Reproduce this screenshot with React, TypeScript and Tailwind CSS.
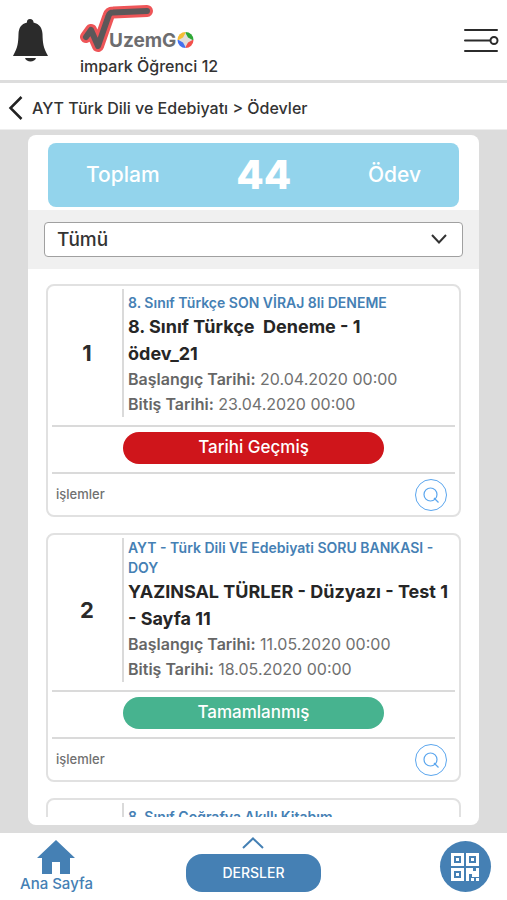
import { useState } from "react";

type Homework = {
  id: number;
  book: string;
  title: string;
  start: string;
  end: string;
  status: "expired" | "completed";
};

const homeworks: Homework[] = [
  {
    id: 1,
    book: "8. Sınıf Türkçe SON VİRAJ 8li DENEME",
    title: "8. Sınıf Türkçe \u00a0Deneme - 1\nödev_21",
    start: "20.04.2020 00:00",
    end: "23.04.2020 00:00",
    status: "expired",
  },
  {
    id: 2,
    book: "AYT - Türk Dili VE Edebiyati SORU BANKASI - DOY",
    title: "YAZINSAL TÜRLER - Düzyazı - Test 1\n- Sayfa 11",
    start: "11.05.2020 00:00",
    end: "18.05.2020 00:00",
    status: "completed",
  },
  {
    id: 3,
    book: "8. Sınıf Coğrafya Akıllı Kitabım",
    title: "8. Sınıf Coğrafya \u00a0Deneme - 1\nödev_22",
    start: "20.04.2020 00:00",
    end: "23.04.2020 00:00",
    status: "completed",
  },
];

const statuses = {
  expired: { label: "Tarihi Geçmiş", color: "bg-[#cf151b]" },
  completed: { label: "Tamamlanmış", color: "bg-[#47b38f]" },
};

const Logo = () => (
  <svg viewBox="0 0 116 50" className="w-[116px] h-[50px]" role="img" aria-label="UzemGO">
    <g fill="none" strokeLinecap="round" strokeLinejoin="round">
      <path d="M6 33 L11 26 L18 42 L28.500 12 Q29.500 8.500 33 8.500 L67 7" stroke="#ee5558" strokeWidth="12" />
      <path d="M6 33 L11 26 L18 42 L28.500 12 Q29.500 8.500 33 8.500 L67 7" stroke="#5c5759" strokeWidth="6" />
    </g>
    <text x="29" y="43" fontSize="19" fontWeight="700" fill="#6d6d6f" fontFamily="Inter, sans-serif">
      UzemG
    </text>
    <path d="M105.500 36 V28 A8 8 0 0 1 113.500 36z" fill="#2ea836" />
    <path d="M105.500 36 H113.500 A8 8 0 0 1 105.500 44z" fill="#f2504b" />
    <path d="M105.500 36 V44 A8 8 0 0 1 97.500 36z" fill="#4470ee" />
    <path d="M105.500 36 H97.500 A8 8 0 0 1 105.500 28z" fill="#f5bd35" />
    <path d="M105.500 29 L108 33.500 L112.500 36 L108 38.500 L105.500 43 L103 38.500 L98.500 36 L103 33.500z" fill="#e2dedb" />
  </svg>
);

const HomeworkCard = ({ homework }: { homework: Homework }) => {
  const status = statuses[homework.status];

  return (
    <article className="shrink-0 border-2 border-[#e1e1e1] rounded-lg px-1 pt-[3px]">
      <div className="flex min-h-32 mb-2">
        <div className="w-[70px] shrink-0 flex items-center justify-center text-[22px] font-bold text-[#2b2b2b]">
          {homework.id}
        </div>
        <div className="flex-1 flex flex-col justify-end border-l-2 border-[#dadada] pl-1">
          <h3 className="text-sm leading-5 font-semibold text-[#4580b4]">{homework.book}</h3>
          <h2 className="text-lg leading-[27px] font-bold text-[#262626] whitespace-pre-line">{homework.title}</h2>
          <p className="text-base leading-[25px] text-[#707070]">
            <b className="font-semibold text-[#666666]">Başlangıç Tarihi:</b> {homework.start}
          </p>
          <p className="text-base leading-[25px] text-[#707070]">
            <b className="font-semibold text-[#666666]">Bitiş Tarihi:</b> {homework.end}
          </p>
        </div>
      </div>
      <div className="border-y-2 border-[#dadada] pt-[5px] pb-2 px-[71px]">
        <div
          className={`h-8 rounded-full flex items-center justify-center text-[17px] font-medium text-white ${status.color}`}
        >
          {status.label}
        </div>
      </div>
      <div className="flex items-center justify-between h-[41px] pl-1 pr-2">
        <span className="text-[13px] font-medium text-[#707070]">işlemler</span>
        <button
          aria-label="İncele"
          className="size-8 rounded-full border border-[#5ba6ee] text-[#5ba6ee] flex items-center justify-center"
        >
          <svg viewBox="0 0 16 16" className="size-4" fill="none" stroke="currentColor" strokeWidth="1.200">
            <circle cx="7.500" cy="7.500" r="6.500" />
            <path d="M11 11 L15.500 15.500" />
          </svg>
        </button>
      </div>
    </article>
  );
};

export default function App() {
  const [filter, setFilter] = useState("all");
  const visible = homeworks.filter((h) => filter === "all" || h.status === filter);

  return (
    <div className="h-screen flex flex-col bg-white font-['Inter',sans-serif] text-[#333333]">
      <header className="h-[83px] shrink-0 flex items-start border-b-3 border-[#dddddd] pl-3 pr-2">
        <button aria-label="Bildirimler" className="mt-[18px]">
          <svg viewBox="0 0 36 45" className="w-9 h-[45px]" fill="#2b2b2b">
            <path d="M18 1 C15.800 1 14.800 2.500 15 4.500 C9 6 6.800 10 6.500 16 C6.200 25 6 29 1 38 H36 C31 29 30.800 25 30.500 16 C30.200 10 27.500 6 21.500 4.500 C21.600 2.500 20.200 1 18 1z" />
            <path d="M13 40 H24 C23 44.500 14 44.500 13 40z" />
          </svg>
        </button>
        <div className="flex flex-col ml-8 pt-1 flex-1">
          <Logo />
          <span className="text-base leading-6 font-medium">impark Öğrenci 12</span>
        </div>
        <button aria-label="Menü" className="mt-7">
          <svg viewBox="0 0 36 26" className="w-9 h-[26px]" fill="none" stroke="#2b2b2b" strokeWidth="2" strokeLinecap="round">
            <path d="M2 2 H34 M2 12.500 H27 M2 23 H34" />
            <circle cx="31" cy="12.500" r="3.500" />
          </svg>
        </button>
      </header>

      <nav className="h-[47px] shrink-0 flex items-center gap-2 pl-2 pt-1 border-b border-[#eeeeee]">
        <button aria-label="Geri">
          <svg viewBox="0 0 16 24" className="w-4 h-6" fill="none" stroke="#222222" strokeWidth="2.500">
            <path d="M13.500 1 L2.500 12 L13.500 23" />
          </svg>
        </button>
        <span className="text-base font-medium">AYT Türk Dili ve Edebiyatı &gt; Ödevler</span>
      </nav>

      <main className="flex-1 min-h-0 flex flex-col bg-[#dcdcdc] px-7 pt-[5px] pb-2">
        <div className="flex-1 min-h-0 flex flex-col bg-white rounded-lg pt-2 pb-2">
          <div className="h-16 shrink-0 mx-5 mb-[3px] rounded-lg bg-[#93d4ec] text-white flex items-center justify-between px-[38px]">
            <span className="text-[21px] font-medium">Toplam</span>
            <span className="text-[40px] font-extrabold">44</span>
            <span className="text-[21px] font-medium">Ödev</span>
          </div>

          <div className="shrink-0 bg-[#f0f0f0] px-4 py-3">
            <div className="relative">
              <select
                aria-label="Ödev durumu"
                value={filter}
                onChange={(e) => setFilter(e.target.value)}
                className="block w-full h-[35px] appearance-none rounded border border-[#a0a0a0] bg-white pl-3 pr-10 text-[19px] leading-7 font-medium"
              >
                <option value="all">Tümü</option>
                <option value="expired">Tarihi Geçmiş</option>
                <option value="completed">Tamamlanmış</option>
              </select>
              <svg
                viewBox="0 0 16 10"
                className="absolute right-4 top-3 w-4 h-[10px] pointer-events-none"
                fill="none"
                stroke="#333333"
                strokeWidth="2"
              >
                <path d="M1 1 L8 8.500 L15 1" />
              </svg>
            </div>
          </div>

          <div className="flex-1 min-h-0 mt-[15px] px-[18px] flex flex-col gap-4 overflow-y-auto [scrollbar-width:none]">
            {visible.map((homework) => (
              <HomeworkCard key={homework.id} homework={homework} />
            ))}
          </div>
        </div>
      </main>

      <footer className="h-[67px] shrink-0 grid grid-cols-3 items-start px-4 text-[#4580b4]">
        <a href="#" className="justify-self-start flex flex-col items-center pt-[7px] pl-1">
          <svg viewBox="0 0 38 34" className="w-[38px] h-[34px]" fill="currentColor">
            <path d="M19 0 L38 18 H33 V34 H23 V22 H15 V34 H5 V18 H0z" />
          </svg>
          <span className="text-[15px] leading-5 font-medium">Ana Sayfa</span>
        </a>
        <div className="justify-self-center flex flex-col items-center gap-[5px] pt-1">
          <svg viewBox="0 0 22 12" className="w-[22px] h-3" fill="none" stroke="currentColor" strokeWidth="2">
            <path d="M1 11 L11 1.500 L21 11" />
          </svg>
          <button className="w-[135px] h-[38px] rounded-2xl bg-[#4580b4] text-white text-sm font-medium">DERSLER</button>
        </div>
        <button
          aria-label="QR kod"
          className="justify-self-end mt-2 size-[51px] rounded-full bg-[#4580b4] flex items-center justify-center"
        >
          <svg viewBox="0 0 28 28" className="size-7" fill="#ffffff">
            <path
              fillRule="evenodd"
              d="M0 0h13v13H0z M3 3v7h7V3z M15 0h13v13H15z M18 3v7h7V3z M0 15h13v13H0z M3 18v7h7v-7z"
            />
            <path d="M5 5h3v3H5z M20 5h3v3h-3z M5 20h3v3H5z" />
            <path d="M15 15h7v3h3v-3h3v9h-7v-3h-3v7h-3z M20 25h3v3h-3z M25 25h3v3h-3z" />
          </svg>
        </button>
      </footer>
    </div>
  );
}
